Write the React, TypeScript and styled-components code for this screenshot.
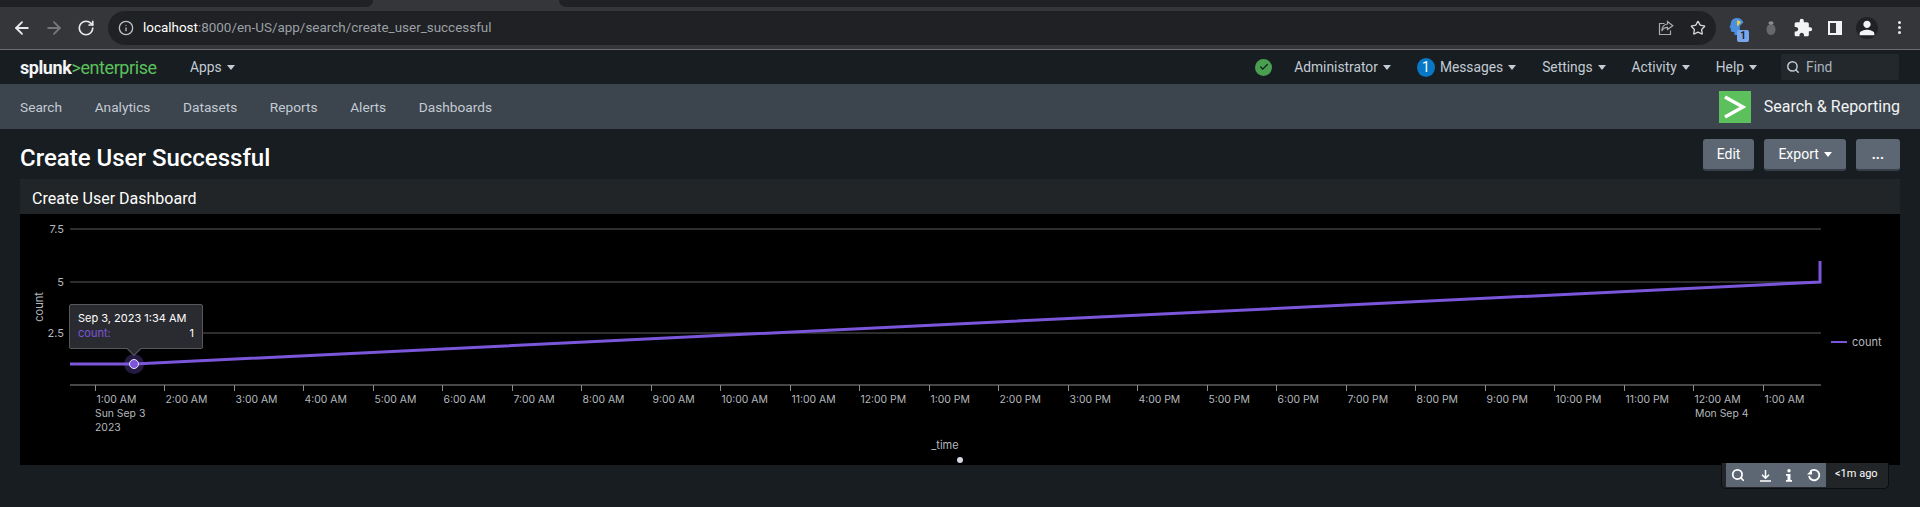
import React from "react";
import styled, { createGlobalStyle } from "styled-components";
import { ArrowLeft, ArrowRight, RotateCw, Info, Star, Search as SearchIcon, Check } from "lucide-react";
import { MdExtension, MdPerson } from "react-icons/md";

const GlobalStyle = createGlobalStyle`
  html, body {
    margin: 0;
    padding: 0;
    background: #171d21;
    overflow: hidden;
  }
  body {
    font-family: Roboto, "Liberation Sans", sans-serif;
  }
  * {
    box-sizing: border-box;
  }
`;

const NAV_ITEMS = ["Search", "Analytics", "Datasets", "Reports", "Alerts", "Dashboards"];
const USER_MENUS = ["Settings", "Activity", "Help"];

const TICK_START = 94.5;
const TICK_STEP = 69.52;
const HOURS = [
  "1:00 AM", "2:00 AM", "3:00 AM", "4:00 AM", "5:00 AM", "6:00 AM", "7:00 AM", "8:00 AM", "9:00 AM",
  "10:00 AM", "11:00 AM", "12:00 PM", "1:00 PM", "2:00 PM", "3:00 PM", "4:00 PM", "5:00 PM", "6:00 PM",
  "7:00 PM", "8:00 PM", "9:00 PM", "10:00 PM", "11:00 PM", "12:00 AM", "1:00 AM",
];

function ShareGlyph() {
  return (
    <svg width="16" height="16" viewBox="0 0 16 16" fill="none" stroke="#a9abae" strokeWidth="1.2">
      <path d="M6.5 3.5H1.5V14.5H12.5V10.5" />
      <path d="M9.5 1.5L14.8 5.8L9.5 9.6V7.4C7 7.4 5 8.6 3.8 11C4 7.6 6 4.4 9.5 4V1.5Z" />
    </svg>
  );
}

function ExtensionGlyph() {
  return (
    <ExtensionBox>
      <svg width="18" height="20" viewBox="0 0 20 22">
        <path d="M9 1C4.5 1 2 4 2 7.5C2 9 1 10 .6 11C1 12 2 12 2 13V15C2 16 3 16.500 4 16.500H6V20H12V10L16 6C15 3 12.500 1 9 1Z" fill="#4a8fe0" />
        <path d="M9 3.500C11 3.500 12.500 4.500 13.200 6.500C12 7 11 7.500 10.500 9.500H9Z" fill="#f2d23a" />
      </svg>
      <ExtensionBadge>1</ExtensionBadge>
    </ExtensionBox>
  );
}

function BugGlyph() {
  return (
    <svg width="12" height="16" viewBox="0 0 12 16">
      <ellipse cx="6" cy="9.500" rx="4.500" ry="5.500" fill="#66686a" />
      <ellipse cx="6" cy="3" rx="2.600" ry="1.800" fill="#8a8c8e" />
    </svg>
  );
}

function DownloadGlyph() {
  return (
    <svg width="13" height="13" viewBox="0 0 13 13" fill="none" stroke="#fff" strokeWidth="1.500">
      <path d="M6.500 1V9M3 5.800L6.500 9.300L10 5.800M1 12H12" />
    </svg>
  );
}

function InfoGlyph() {
  return (
    <svg width="8" height="13" viewBox="0 0 8 13" fill="#fff">
      <circle cx="4" cy="1.800" r="1.700" />
      <path d="M1 5H5.500V11H7V12.800H1V11H2.500V6.800H1Z" />
    </svg>
  );
}

function RefreshGlyph() {
  return (
    <svg width="14" height="14" viewBox="0 0 14 14" fill="none" stroke="#fff" strokeWidth="1.800">
      <path d="M3.200 3.600A5.200 5.200 0 1 1 2 8" />
      <path d="M0 6.500L5 6.500L5 1.500Z" fill="#fff" stroke="none" />
    </svg>
  );
}

function TimeChart() {
  return (
    <ChartSvg viewBox="20 214 1880 251">
      {[229, 282, 333].map((y) => (
        <line key={y} x1="70" x2="1821" y1={y} y2={y} stroke="#5a5a5a" strokeWidth="1" />
      ))}
      <line x1="70" x2="1821" y1="385" y2="385" stroke="#8c8c8c" strokeWidth="1" />

      <ChartLabel x="64" y="233" textAnchor="end">7.5</ChartLabel>
      <ChartLabel x="64" y="286" textAnchor="end">5</ChartLabel>
      <ChartLabel x="64" y="337" textAnchor="end">2.5</ChartLabel>
      <ChartLabel x="43" y="307" textAnchor="middle" transform="rotate(-90 43 307)">count</ChartLabel>

      {HOURS.map((label, i) => {
        const x = Math.round(TICK_START + TICK_STEP * i) + 0.5;
        return (
          <g key={i}>
            <line x1={x} x2={x} y1="385" y2="391" stroke="#8c8c8c" />
            <TickLabel x={x + 1} y="403">{label}</TickLabel>
          </g>
        );
      })}
      <TickLabel x="95" y="417">Sun Sep 3</TickLabel>
      <TickLabel x="95" y="431">2023</TickLabel>
      <TickLabel x="1695" y="417">Mon Sep 4</TickLabel>

      <polyline
        points="70,364 134,364 1820,282 1820,261"
        fill="none"
        stroke="#7b56db"
        strokeWidth="3"
      />
      <circle cx="134" cy="364" r="10" fill="#7b56db" fillOpacity="0.3" />
      <circle cx="134" cy="364" r="4.500" fill="#7b56db" stroke="#e8e4f5" strokeWidth="1" />

      <line x1="1831" x2="1847" y1="342" y2="342" stroke="#7b56db" strokeWidth="2" />
      <ChartLabel x="1852" y="346">count</ChartLabel>

      <ChartLabel x="945" y="449" textAnchor="middle">_time</ChartLabel>
      <circle cx="960" cy="460" r="3" fill="#d4d8e0" />
    </ChartSvg>
  );
}

export default function App() {
  return (
    <>
      <GlobalStyle />
      <Page>
        <TabStrip>
          <TabGapLeft />
          <ActiveTab />
          <TabGapRight />
        </TabStrip>
        <Toolbar>
          <ToolButton><ArrowLeft size={20} color="#e8eaed" strokeWidth={2.200} /></ToolButton>
          <ToolButton><ArrowRight size={20} color="#75777a" strokeWidth={2.200} /></ToolButton>
          <ToolButton><RotateCw size={18} color="#e8eaed" strokeWidth={2.200} /></ToolButton>
          <Omnibox>
            <Info size={16} color="#bdc1c6" />
            <UrlText>
              <strong>localhost</strong>:8000/en-US/app/search/create_user_successful
            </UrlText>
            <OmniboxEnd>
              <ShareGlyph />
              <Star size={16} color="#d4d6d9" />
            </OmniboxEnd>
          </Omnibox>
          <ExtensionTray>
            <ExtensionSlot><ExtensionGlyph /></ExtensionSlot>
            <ExtensionSlot><BugGlyph /></ExtensionSlot>
            <ExtensionSlot><MdExtension size={20} color="#f1f3f4" /></ExtensionSlot>
            <ExtensionSlot><SidePanelIcon /></ExtensionSlot>
            <ExtensionSlot><ProfileDisc><MdPerson size={22} color="#f1f3f4" /></ProfileDisc></ExtensionSlot>
            <ExtensionSlot><KebabMenu><i /><i /><i /></KebabMenu></ExtensionSlot>
          </ExtensionTray>
        </Toolbar>

        <SplunkBar>
          <Logo>
            <b>splunk</b><em>&gt;enterprise</em>
          </Logo>
          <AppsMenu>Apps<Caret /></AppsMenu>
          <UserArea>
            <StatusDot><Check size={10} color="#10231a" strokeWidth={3} /></StatusDot>
            <BarMenu>Administrator<Caret /></BarMenu>
            <BarMenu>
              <MessageBadge>1</MessageBadge>
              Messages<Caret />
            </BarMenu>
            {USER_MENUS.map((item) => (
              <BarMenu key={item}>{item}<Caret /></BarMenu>
            ))}
            <FindBox>
              <SearchIcon size={14} color="#c3cbd4" strokeWidth={2.500} />
              Find
            </FindBox>
          </UserArea>
        </SplunkBar>

        <AppBar>
          <AppNav>
            {NAV_ITEMS.map((item) => (
              <AppNavLink key={item}>{item}</AppNavLink>
            ))}
          </AppNav>
          <AppBrand>
            <AppMark>
              <svg width="22" height="24" viewBox="0 0 22 24" fill="none" stroke="#fff" strokeWidth="3.500">
                <path d="M1 2L19 12L1 22" />
              </svg>
            </AppMark>
            Search &amp; Reporting
          </AppBrand>
        </AppBar>

        <Main>
          <TitleRow>
            <PageTitle>Create User Successful</PageTitle>
            <Actions>
              <ActionButton>Edit</ActionButton>
              <ActionButton>Export<Caret $light /></ActionButton>
              <ActionButton $wide>...</ActionButton>
            </Actions>
          </TitleRow>
          <Panel>
            <PanelTitle>Create User Dashboard</PanelTitle>
            <ChartFrame>
              <TimeChart />
              <Tooltip>
                <TooltipTime>Sep 3, 2023 1:34 AM</TooltipTime>
                <TooltipRow>
                  <TooltipSeries>count:</TooltipSeries>
                  <span>1</span>
                </TooltipRow>
              </Tooltip>
            </ChartFrame>
            <PanelFooter>
              <FooterTools>
                <SearchIcon size={14} color="#fff" strokeWidth={3} />
                <DownloadGlyph />
                <InfoGlyph />
                <RefreshGlyph />
              </FooterTools>
              <FooterAge>&lt;1m ago</FooterAge>
            </PanelFooter>
          </Panel>
        </Main>
      </Page>
    </>
  );
}

const Page = styled("div")`
  width: 1920px;
  height: 507px;
  display: flex;
  flex-direction: column;
  overflow: hidden;
  background: #171d21;
`;

const TabStrip = styled("div")`
  height: 7px;
  display: flex;
  background: #35363a;
`;

const TabGapLeft = styled("div")`
  width: 373px;
  background: #202124;
  border-bottom-right-radius: 7px;
`;

const ActiveTab = styled("div")`
  width: 186px;
`;

const TabGapRight = styled("div")`
  flex: 1;
  background: #202124;
  border-bottom-left-radius: 7px;
`;

const Toolbar = styled("div")`
  height: 43px;
  display: flex;
  align-items: center;
  padding: 0 0 1px 6px;
  background: #35363a;
  border-bottom: 1px solid #6b6c6e;
`;

const ToolButton = styled("div")`
  width: 32px;
  display: flex;
  justify-content: center;
`;

const Omnibox = styled("div")`
  width: 1608px;
  height: 34px;
  margin-left: 6px;
  display: flex;
  align-items: center;
  gap: 9px;
  padding: 0 10px 0 10px;
  border-radius: 17px;
  background: #202124;
`;

const UrlText = styled("div")`
  font-size: 13.45px;
  color: #9aa0a6;
  strong {
    font-weight: 400;
    color: #fff;
  }
`;

const OmniboxEnd = styled("div")`
  margin-left: auto;
  display: flex;
  align-items: center;
  gap: 16px;
`;

const ExtensionTray = styled("div")`
  flex: 1;
  display: flex;
  align-items: center;
  padding-left: 7px;
`;

const ExtensionSlot = styled("div")`
  width: 32px;
  display: flex;
  align-items: center;
  justify-content: center;
`;

const ExtensionBox = styled("div")`
  position: relative;
  width: 20px;
  height: 22px;
`;

const ExtensionBadge = styled("span")`
  position: absolute;
  right: 0;
  bottom: -3px;
  width: 12px;
  height: 12px;
  border-radius: 2px;
  background: #7aa7ec;
  color: #1c2333;
  font-size: 10px;
  font-weight: 700;
  line-height: 12px;
  text-align: center;
`;

const SidePanelIcon = styled("div")`
  width: 14px;
  height: 14px;
  border: 2px solid #f1f3f4;
  border-right-width: 6px;
`;

const ProfileDisc = styled("div")`
  width: 22px;
  height: 22px;
  border-radius: 50%;
  background: #202124;
  display: flex;
  align-items: center;
  justify-content: center;
`;

const KebabMenu = styled("div")`
  display: flex;
  flex-direction: column;
  gap: 2px;
  i {
    width: 3px;
    height: 3px;
    border-radius: 50%;
    background: #e8eaed;
  }
`;

const SplunkBar = styled("div")`
  height: 34px;
  display: flex;
  align-items: center;
  padding: 0 21px 0 20px;
  background: #171d21;
  color: #c3cbd4;
  font-size: 13.8px;
`;

const Logo = styled("div")`
  width: 136px;
  font-size: 18px;
  letter-spacing: -0.42px;
  white-space: nowrap;
  b {
    color: #f2f4f5;
    font-weight: 700;
  }
  em {
    color: #5cc05c;
    font-style: normal;
  }
`;

const AppsMenu = styled("div")`
  margin-left: 34px;
  display: flex;
  align-items: center;
`;

const Caret = styled("span")<{ $light?: boolean }>`
  width: 0;
  height: 0;
  margin-left: 5px;
  border-left: 4px solid transparent;
  border-right: 4px solid transparent;
  border-top: 5px solid ${(p) => (p.$light ? "#fff" : "#c3cbd4")};
`;

const UserArea = styled("div")`
  margin-left: auto;
  display: flex;
  align-items: center;
  gap: 26px;
`;

const StatusDot = styled("div")`
  width: 17px;
  height: 17px;
  margin-right: -4px;
  border-radius: 50%;
  background: #4a9e4f;
  display: flex;
  align-items: center;
  justify-content: center;
`;

const BarMenu = styled("div")`
  display: flex;
  align-items: center;
`;

const MessageBadge = styled("span")`
  width: 18px;
  height: 19px;
  margin-right: 5px;
  border-radius: 50%;
  background: #0877c4;
  color: #fff;
  text-align: center;
  line-height: 19px;
`;

const FindBox = styled("div")`
  width: 118px;
  height: 26px;
  margin-left: -2px;
  padding-left: 5px;
  display: flex;
  align-items: center;
  gap: 6px;
  border-radius: 2px;
  background: #23282d;
  color: #aab3bd;
`;

const AppBar = styled("div")`
  height: 45px;
  display: flex;
  align-items: center;
  justify-content: space-between;
  padding: 0 20px;
  background: #3c444d;
`;

const AppNav = styled("nav")`
  display: flex;
  gap: 32.6px;
`;

const AppNavLink = styled("a")`
  font-size: 13.7px;
  color: #c3cbd4;
`;

const AppBrand = styled("div")`
  display: flex;
  align-items: center;
  gap: 13px;
  font-size: 16px;
  color: #f2f4f5;
`;

const AppMark = styled("div")`
  width: 32px;
  height: 32px;
  display: flex;
  align-items: center;
  justify-content: center;
  background: #5cc05c;
`;

const Main = styled("main")`
  padding: 0 20px;
`;

const TitleRow = styled("div")`
  height: 50px;
  display: flex;
  align-items: flex-start;
  justify-content: space-between;
  padding-top: 10px;
`;

const PageTitle = styled("h1")`
  margin: 5px 0 0;
  font-size: 24px;
  font-weight: 500;
  line-height: 28px;
  color: #fff;
`;

const Actions = styled("div")`
  display: flex;
  gap: 10px;
`;

const ActionButton = styled("button")<{ $wide?: boolean }>`
  height: 32px;
  padding: 0 ${(p) => (p.$wide ? "16px" : "14px")};
  display: flex;
  align-items: center;
  border: 0;
  border-bottom: 2px solid #363e47;
  border-radius: 3px;
  background: #5c6773;
  color: #fff;
  font-family: inherit;
  font-size: 14px;
  font-weight: ${(p) => (p.$wide ? 700 : 400)};
`;

const Panel = styled("section")`
  position: relative;
`;

const PanelTitle = styled("h2")`
  height: 35px;
  margin: 0;
  padding: 3px 0 0 12px;
  font-size: 16px;
  font-weight: 400;
  line-height: 33px;
  color: #fff;
  background: #212527;
`;

const ChartFrame = styled("div")`
  position: relative;
  height: 251px;
  background: #000;
`;

const ChartSvg = styled("svg")`
  display: block;
  width: 1880px;
  height: 251px;
`;

const ChartLabel = styled("text")`
  font-family: Inter, "Noto Sans", sans-serif;
  font-size: 11px;
  fill: #b4b8bd;
`;

const TickLabel = styled(ChartLabel)`
  font-size: 10.4px;
`;

const Tooltip = styled("div")`
  position: absolute;
  left: 49px;
  top: 90px;
  width: 134px;
  height: 45px;
  padding: 6px 8px;
  background: #2a2b30;
  border: 1px solid #55575c;
  border-radius: 2px;
  font-family: Inter, "Noto Sans", sans-serif;
  font-size: 11px;
  line-height: 15px;
  color: #fff;
  &::after {
    content: "";
    position: absolute;
    left: 59px;
    bottom: -6px;
    width: 9px;
    height: 9px;
    background: #2a2b30;
    border-right: 1px solid #55575c;
    border-bottom: 1px solid #55575c;
    transform: rotate(45deg);
  }
`;

const TooltipTime = styled("div")`
  white-space: nowrap;
`;

const TooltipRow = styled("div")`
  display: flex;
  justify-content: space-between;
`;

const TooltipSeries = styled("span")`
  color: #7b56db;
`;

const PanelFooter = styled("div")`
  position: absolute;
  right: 11px;
  bottom: -24px;
  width: 168px;
  height: 26px;
  padding-left: 4px;
  display: flex;
  background: #212527;
  border: 1px solid #0b0d0f;
  border-top: 0;
  border-radius: 0 0 5px 5px;
`;

const FooterTools = styled("div")`
  width: 100px;
  height: 24px;
  padding: 0 5px 0 5px;
  display: flex;
  align-items: center;
  justify-content: space-between;
  background: #5c6773;
`;

const FooterAge = styled("div")`
  margin-left: 9px;
  font-size: 11px;
  line-height: 22px;
  color: #fff;
`;
